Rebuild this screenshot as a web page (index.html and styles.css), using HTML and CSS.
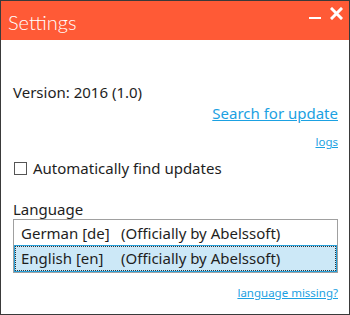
FILE: index.html
```html
<!DOCTYPE html>
<html lang="en">
<head>
    <meta charset="UTF-8">
    <meta name="viewport" content="width=device-width, initial-scale=1.0">
    <title>Settings</title>
    <link rel="stylesheet" href="styles.css">
</head>
<body>
    <div class="window">
        <div class="titlebar">
            <div class="title">Settings</div>
            <div class="controls">
                <span class="minimize"></span>
                <svg class="close" width="13" height="13" viewBox="0 0 13 13">
                    <path d="M2 2 L11 11 M11 2 L2 11" stroke="#fff" stroke-width="3" stroke-linecap="square"/>
                </svg>
            </div>
        </div>

        <div class="content">
            <div class="version">Version: 2016 (1.0)</div>
            <div class="link-row"><a class="link big">Search for update</a></div>
            <div class="link-row logs-row"><a class="link small">logs</a></div>

            <label class="check-row">
                <span class="checkbox"></span>
                <span>Automatically find updates</span>
            </label>

            <div class="lang-label">Language</div>
            <div class="listbox">
                <div class="item"><span class="code">German [de]</span>(Officially by Abelssoft)</div>
                <div class="item selected"><span class="code">English [en]</span>(Officially by Abelssoft)</div>
            </div>
            <div class="link-row missing-row"><a class="link small">language missing?</a></div>
        </div>
    </div>
</body>
</html>
```

FILE: styles.css
```css
* {
    margin: 0;
    padding: 0;
    box-sizing: border-box;
}

body {
    font-family: "Noto Sans", "Open Sans", sans-serif;
    background: #fff;
}

.window {
    width: 350px;
    height: 315px;
    border: 1px solid #3a3a3a;
    background: #fff;
    color: #1e1e1e;
}

.titlebar {
    height: 39px;
    background: #ff5a36;
    display: flex;
    justify-content: space-between;
    align-items: flex-start;
}

.title {
    color: #fff;
    font-family: Lato, "Noto Sans", sans-serif;
    font-size: 20px;
    font-weight: 300;
    padding: 7px 0 0 7px;
    line-height: 28px;
}

.controls {
    display: flex;
    align-items: flex-start;
    gap: 9px;
    padding: 6px 6px 0 0;
}

.minimize {
    display: block;
    width: 12px;
    height: 2px;
    background: #fff;
    margin-top: 10px;
}

.close {
    display: block;
}

.content {
    padding: 42px 11px 0 12px;
    font-size: 15px;
}

.version {
    line-height: 20px;
}

.link-row {
    display: flex;
    justify-content: flex-end;
}

.link {
    color: #1ba1e2;
    text-decoration: underline;
    cursor: pointer;
}

.link.big {
    font-size: 15px;
    line-height: 20px;
    margin-top: 1px;
}

.link.small {
    font-size: 11.5px;
    line-height: 14px;
}

.logs-row {
    margin-top: 12px;
}

.check-row {
    display: flex;
    align-items: center;
    gap: 6px;
    margin-top: 9px;
    line-height: 20px;
}

.checkbox {
    width: 13px;
    height: 13px;
    border: 1px solid #555;
    background: #fff;
    margin-left: 1px;
}

.lang-label {
    margin-top: 21px;
    line-height: 20px;
}

.listbox {
    margin-top: 0;
    border: 1px solid #a0a0a0;
    padding: 1px;
}

.item {
    height: 25px;
    line-height: 23px;
    padding-left: 5px;
    border: 1px solid transparent;
    white-space: nowrap;
}

.item .code {
    display: inline-block;
    width: 100px;
}

.item.selected {
    background: #cce8f7;
    border: 1px dotted #333;
    outline: 1px solid #26a0da;
}

.missing-row {
    margin-top: 13px;
}
```
